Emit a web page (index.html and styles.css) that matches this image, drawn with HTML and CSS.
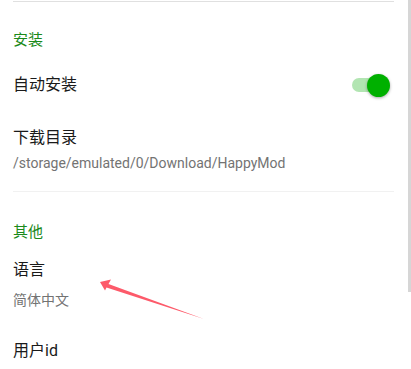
FILE: index.html
```html
<!DOCTYPE html>
<html>
<head>
<meta charset="utf-8">
<link rel="stylesheet" href="styles.css">
</head>
<body>
<div class="screen">
  <div class="divider divider-top"></div>
  <div class="cat">安装</div>
  <div class="row row-switch">
    <div class="title">自动安装</div>
    <div class="switch"><div class="track"></div><div class="thumb"></div></div>
  </div>
  <div class="row row-dir">
    <div class="title">下载目录</div>
    <div class="summary">/storage/emulated/0/Download/HappyMod</div>
  </div>
  <div class="divider divider-mid"></div>
  <div class="cat cat-other">其他</div>
  <div class="row row-lang">
    <div class="title">语言</div>
    <div class="summary summary-cjk">简体中文</div>
  </div>
  <div class="row row-uid">
    <div class="title">用户id</div>
  </div>
  <div class="scrollbar"></div>
  <svg class="arrow" width="411" height="369" viewBox="0 0 411 369">
    <polygon points="100,282 111,279.5 108.5,284 204,319 106.5,287.5 105,290.5" fill="#fd5a6a"/>
  </svg>
</div>
</body>
</html>
```
FILE: styles.css
```css
html, body {
  margin: 0;
  padding: 0;
  background: #ffffff;
}
.screen {
  position: relative;
  width: 411px;
  height: 369px;
  overflow: hidden;
  font-family: Roboto, "Noto Sans CJK SC", sans-serif;
  color: #212121;
}
.divider {
  margin-left: 13px;
  margin-right: 17px;
  height: 1px;
}
.divider-top {
  margin-top: 1px;
  background: #e0e0e0;
}
.divider-mid {
  margin-top: 18px;
  background: #f1f1f1;
}
.cat {
  padding-left: 13px;
  padding-top: 28px;
  font-size: 15px;
  line-height: 20px;
  color: #1b8a1b;
}
.cat-other {
  padding-top: 30px;
}
.row {
  padding-left: 13px;
  padding-right: 21px;
}
.title {
  font-size: 16px;
  line-height: 22px;
  color: #1a1a1a;
}
.summary {
  font-size: 14px;
  line-height: 20px;
  color: #737373;
  margin-top: 4px;
}
.summary-cjk {
  margin-top: 9px;
}
.row-switch {
  margin-top: 24px;
  display: flex;
  align-items: center;
  justify-content: space-between;
  height: 22px;
}
.row-dir {
  margin-top: 31px;
}
.row-lang {
  margin-top: 17px;
}
.row-uid {
  margin-top: 30px;
}
.switch {
  position: relative;
  width: 38px;
  height: 23px;
}
.track {
  position: absolute;
  left: 0;
  top: 4.5px;
  width: 34px;
  height: 14px;
  border-radius: 7px;
  background: #b2e5b2;
}
.thumb {
  position: absolute;
  right: 0;
  top: 0;
  width: 23px;
  height: 23px;
  border-radius: 50%;
  background: #00b000;
  box-shadow: 0 1px 3px rgba(0, 0, 0, 0.35);
}
.scrollbar {
  position: absolute;
  right: 0;
  top: 0;
  width: 3px;
  height: 292px;
  background: #d6d6d6;
}
.arrow {
  position: absolute;
  left: 0;
  top: 0;
}
```
